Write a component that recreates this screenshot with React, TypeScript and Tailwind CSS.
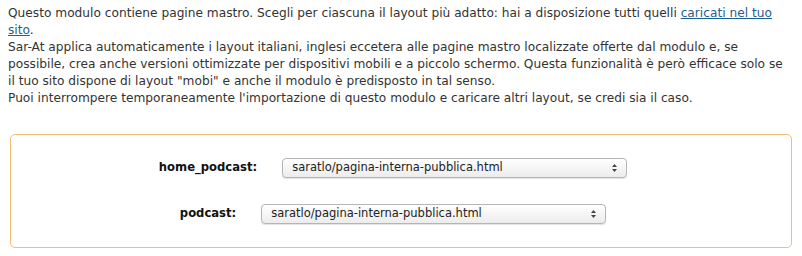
const font = { fontFamily: '"DejaVu Sans", Verdana, sans-serif' };

function FakeSelect({ value }: { value: string }) {
  return (
    <div className="flex h-[20px] w-[345px] items-center justify-between rounded-[4px] border border-[#b5b5b5] bg-gradient-to-b from-white to-[#ececec] pl-[9px] pr-[8px] text-[11.5px] text-[#222] shadow-[0_1px_1px_rgba(0,0,0,0.12)]">
      <span>{value}</span>
      <svg width="7" height="10" viewBox="0 0 7 10" className="text-[#444]">
        <path d="M3.5 1 L6 4 L1 4 Z" fill="currentColor" />
        <path d="M3.5 9 L6 6 L1 6 Z" fill="currentColor" />
      </svg>
    </div>
  );
}

export default function App() {
  return (
    <div className="h-[256px] w-[802px] bg-white text-[#333]" style={font}>
      {/* Intro */}
      <p className="whitespace-nowrap pl-[8px] pt-[5px] text-[12.2px] leading-[17px]">
        Questo modulo contiene pagine mastro. Scegli per ciascuna il layout più adatto: hai a disposizione tutti quelli{' '}
        <a href="#" className="text-[#1f5f8e] underline">caricati nel tuo</a>
        <br />
        <a href="#" className="text-[#1f5f8e] underline">sito</a>.
        <br />
        Sar-At applica automaticamente i layout italiani, inglesi eccetera alle pagine mastro localizzate offerte dal modulo e, se
        <br />
        possibile, crea anche versioni ottimizzate per dispositivi mobili e a piccolo schermo. Questa funzionalità è però efficace solo se
        <br />
        il tuo sito dispone di layout "mobi" e anche il modulo è predisposto in tal senso.
        <br />
        Puoi interrompere temporaneamente l'importazione di questo modulo e caricare altri layout, se credi sia il caso.
      </p>

      {/* Layout box */}
      <div className="ml-[10px] mt-[27px] flex h-[114px] w-[782px] flex-col items-center justify-center gap-[26px] rounded-[5px] border border-[#f3bd74] pr-[16px]">
        <div className="flex items-center gap-[25px]">
          <span className="text-[11.6px] font-bold text-[#111]">home_podcast:</span>
          <FakeSelect value="saratlo/pagina-interna-pubblica.html" />
        </div>
        <div className="flex items-center gap-[25px]">
          <span className="text-[11.6px] font-bold text-[#111]">podcast:</span>
          <FakeSelect value="saratlo/pagina-interna-pubblica.html" />
        </div>
      </div>
    </div>
  );
}
